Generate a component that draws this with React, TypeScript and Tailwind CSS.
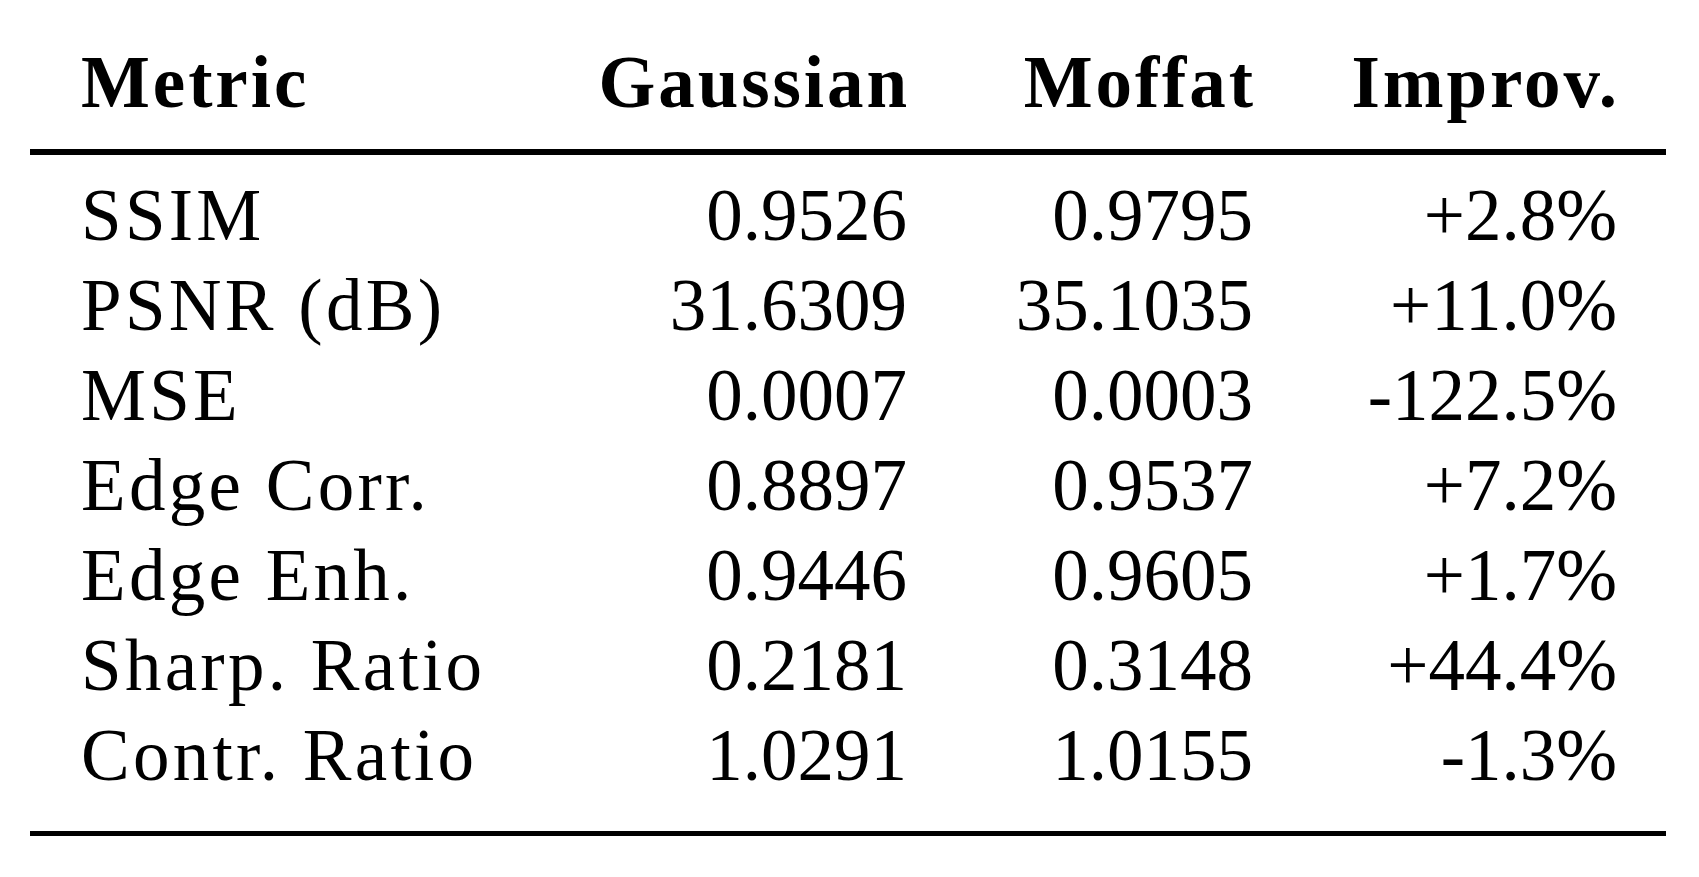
const rows = [
  ["SSIM", "0.9526", "0.9795", "+2.8%"],
  ["PSNR (dB)", "31.6309", "35.1035", "+11.0%"],
  ["MSE", "0.0007", "0.0003", "-122.5%"],
  ["Edge Corr.", "0.8897", "0.9537", "+7.2%"],
  ["Edge Enh.", "0.9446", "0.9605", "+1.7%"],
  ["Sharp. Ratio", "0.2181", "0.3148", "+44.4%"],
  ["Contr. Ratio", "1.0291", "1.0155", "-1.3%"],
];

const cols = "grid grid-cols-[424px_402px_346px_364px] pl-[51px] pr-[49px]";

const App = () => {
  return (
    <div className="min-h-[877px] w-full bg-white font-['Liberation_Serif',serif] text-[73px] leading-[90px] text-black">
      <div className="ml-[30px] w-[1636px] pt-[38px]">
        <div className={`${cols} font-bold`}>
          <div className="tracking-[0.04em]">Metric</div>
          <div className="-mr-[3px] text-right tracking-[0.04em]">Gaussian</div>
          <div className="-mr-[3px] text-right tracking-[0.04em]">Moffat</div>
          <div className="-mr-[3px] text-right tracking-[0.04em]">Improv.</div>
        </div>
        <div className="mt-[21px] h-[6px] bg-black" />
        <div className="pt-[16px]">
          {rows.map(([name, g, m, imp]) => (
            <div key={name} className={cols}>
              <div className="tracking-[0.045em]">{name}</div>
              <div className="text-right">{g}</div>
              <div className="text-right">{m}</div>
              <div className="text-right">{imp}</div>
            </div>
          ))}
        </div>
        <div className="mt-[30px] h-[5px] bg-black" />
      </div>
    </div>
  );
};

export default App;
